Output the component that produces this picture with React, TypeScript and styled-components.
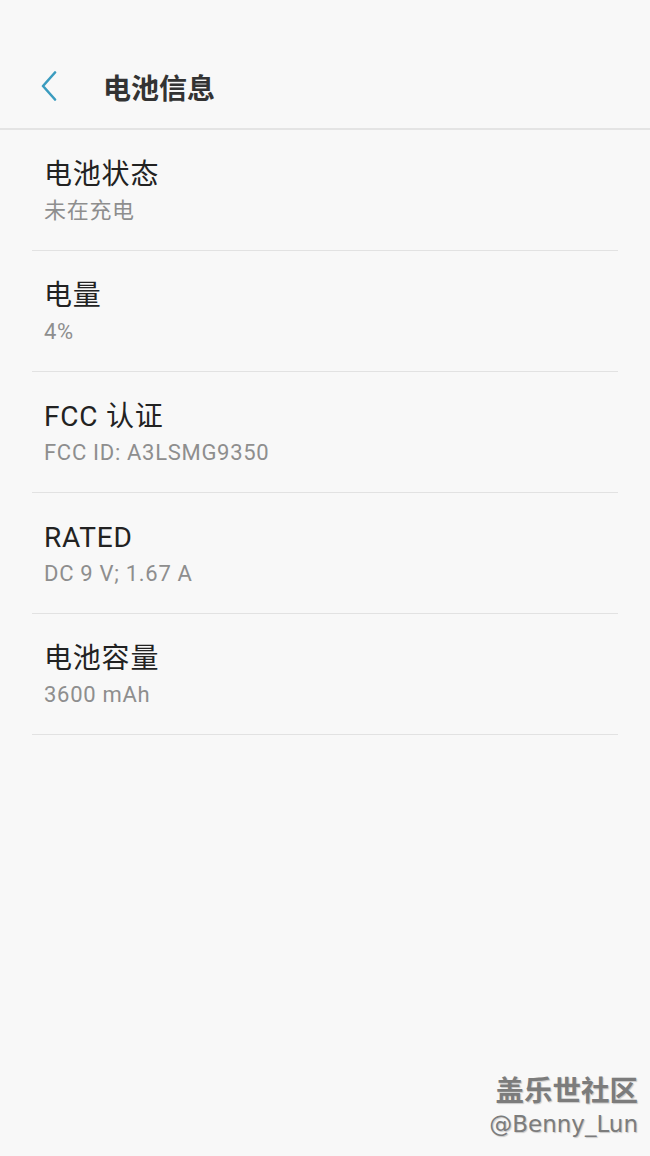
import React from 'react';
import styled, { createGlobalStyle } from 'styled-components';

const GlobalStyle = createGlobalStyle`
    html, body {
        margin: 0;
        padding: 0;
        background: #f8f8f8;
    }
    body {
        font-family: Roboto, "Noto Sans CJK SC", sans-serif;
    }
`;

const Page = styled.div`
    position: relative;
    width: 650px;
    height: 1156px;
    background: #f8f8f8;
    overflow: hidden;
`;

const Header = styled.div`
    display: flex;
    align-items: center;
    height: 130px;
    padding: 46px 0 0 34px;
    box-sizing: border-box;
    border-bottom: 2px solid #e4e4e4;
`;

const BackButton = styled.div`
    display: flex;
    align-items: center;
    justify-content: center;
    width: 30px;
    height: 40px;
    margin-top: -2px;
`;

const HeaderTitle = styled.h1`
    margin: 0 0 0 39px;
    font-family: "Noto Sans CJK SC", sans-serif;
    font-size: 28px;
    font-weight: 700;
    color: #333;
`;

const List = styled.div`
    display: flex;
    flex-direction: column;
`;

const Item = styled.div`
    display: flex;
    flex-direction: column;
    margin: 0 32px;
    padding: 27px 12px 0;
    height: 121px;
    box-sizing: border-box;
    border-bottom: 1px solid #e2e2e2;
`;

const ItemTitle = styled.div`
    font-family: Roboto, "Noto Sans CJK SC", sans-serif;
    font-size: 28px;
    line-height: 36px;
    letter-spacing: 0.8px;
    color: #222;
`;

const ItemValue = styled.div`
    margin-top: 3px;
    font-family: Roboto, "Noto Sans CJK SC", sans-serif;
    font-size: 22px;
    line-height: 30px;
    letter-spacing: 0.7px;
    color: #8e8e8e;
`;

const Watermark = styled.div`
    position: absolute;
    right: 12px;
    bottom: 16px;
    display: flex;
    flex-direction: column;
    align-items: flex-end;
    color: #7c7c7c;
    text-shadow: 1px 1px 1px #c8c8c8;
`;

const WatermarkTitle = styled.div`
    font-family: "Noto Sans CJK SC", sans-serif;
    font-size: 28.5px;
    line-height: 38px;
    font-weight: 700;
`;

const WatermarkUser = styled.div`
    font-family: "DejaVu Sans", sans-serif;
    font-size: 23px;
    line-height: 32px;
`;

const items = [
    { title: '电池状态', value: '未在充电' },
    { title: '电量', value: '4%' },
    { title: 'FCC 认证', value: 'FCC ID: A3LSMG9350' },
    { title: 'RATED', value: 'DC 9 V; 1.67 A' },
    { title: '电池容量', value: '3600 mAh' },
];

export default function App() {
    return (
        <Page>
            <GlobalStyle />
            <Header>
                <BackButton>
                    <svg width="20" height="30" viewBox="0 0 20 30">
                        <path d="M16 1.5 L4 15 L16 28.5" fill="none" stroke="#3b9cbf" strokeWidth="2.6" strokeLinecap="round" strokeLinejoin="round" />
                    </svg>
                </BackButton>
                <HeaderTitle>电池信息</HeaderTitle>
            </Header>
            <List>
                {items.map((item) => (
                    <Item key={item.title}>
                        <ItemTitle>{item.title}</ItemTitle>
                        <ItemValue>{item.value}</ItemValue>
                    </Item>
                ))}
            </List>
            <Watermark>
                <WatermarkTitle>盖乐世社区</WatermarkTitle>
                <WatermarkUser>@Benny_Lun</WatermarkUser>
            </Watermark>
        </Page>
    );
}
